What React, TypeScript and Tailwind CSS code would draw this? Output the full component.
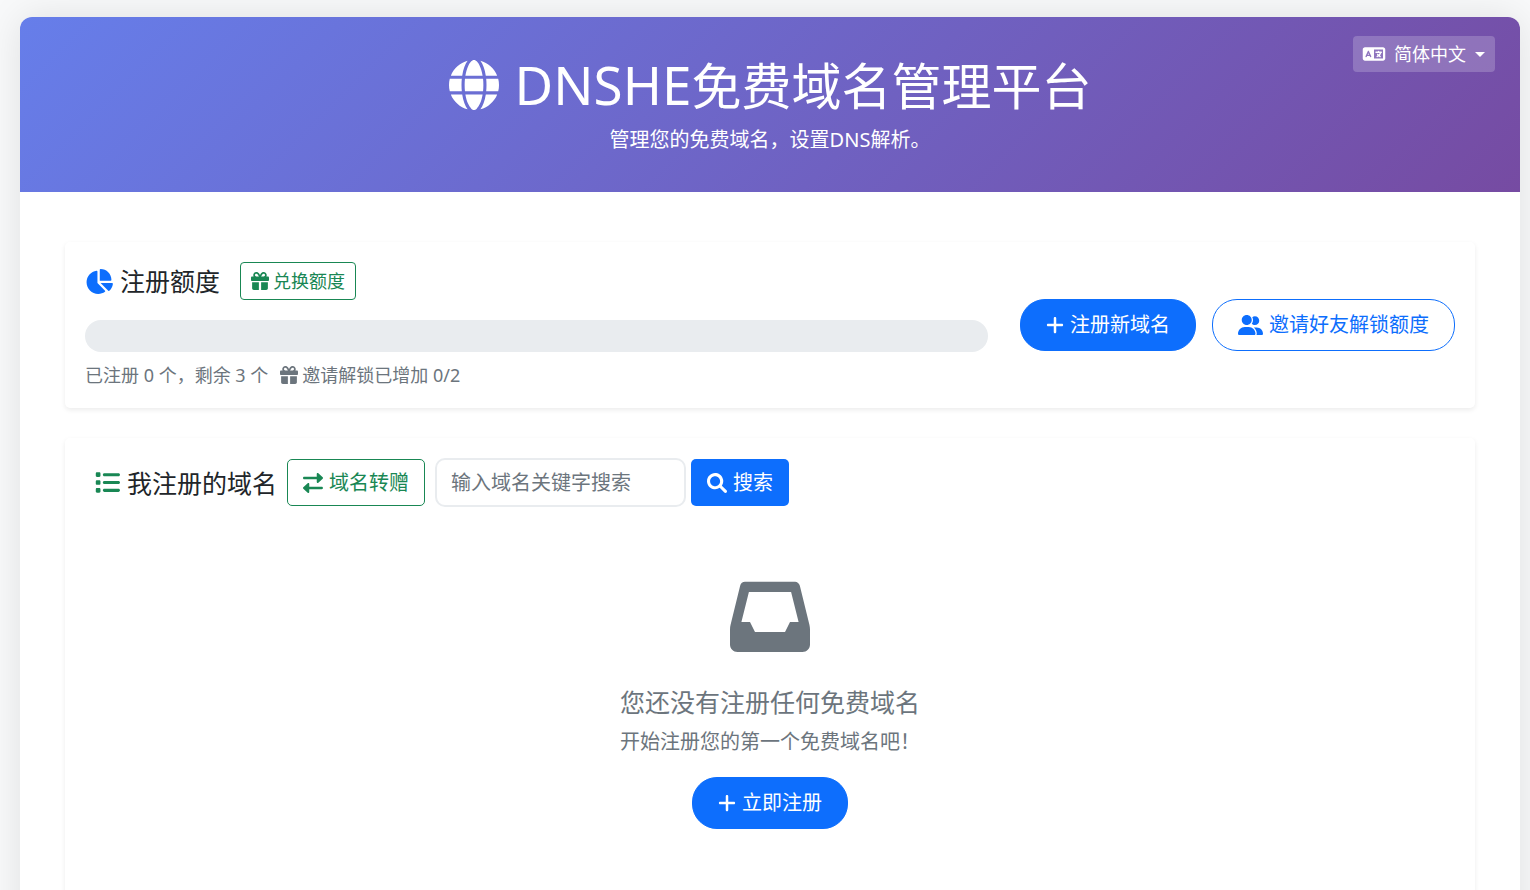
import { useState } from 'react'
import type { ReactNode } from 'react'
import { FaChartPie, FaGift, FaGlobe, FaLanguage, FaList } from 'react-icons/fa6'

interface Quota {
  used: number
  total: number
  inviteBonus: number
  inviteLimit: number
}

interface IconProps {
  className?: string
}

const quota: Quota = { used: 0, total: 3, inviteBonus: 0, inviteLimit: 2 }

function PlusIcon({ className }: IconProps) {
  return (
    <svg viewBox="0 0 448 512" fill="currentColor" className={className} aria-hidden>
      <path d="M432 256c0 17.69-14.33 32.01-32 32.01H256v144c0 17.69-14.33 31.99-32 31.99s-32-14.3-32-31.99v-144H48c-17.67 0-32-14.32-32-32.01s14.33-31.99 32-31.99H192v-144c0-17.69 14.33-32.01 32-32.01s32 14.32 32 32.01v144h144C417.7 224 432 238.3 432 256z" />
    </svg>
  )
}

function SearchIcon({ className }: IconProps) {
  return (
    <svg viewBox="0 0 512 512" fill="currentColor" className={className} aria-hidden>
      <path d="M500.3 443.7l-119.7-119.7c27.22-40.41 40.65-90.9 33.46-144.7C401.8 87.79 326.8 13.32 235.2 1.723C99.01-15.51-15.51 99.01 1.724 235.2c11.6 91.64 86.08 166.7 177.6 178.9c53.8 7.189 104.3-6.236 144.7-33.46l119.7 119.7c15.62 15.62 40.95 15.62 56.57 0C515.9 484.7 515.9 459.3 500.3 443.7zM79.1 208c0-70.58 57.42-128 128-128s128 57.42 128 128c0 70.58-57.42 128-128 128S79.1 278.6 79.1 208z" />
    </svg>
  )
}

function InboxIcon({ className }: IconProps) {
  return (
    <svg viewBox="0 0 512 512" fill="currentColor" className={className} aria-hidden>
      <path d="M447 56.25C443.5 42 430.7 31.1 416 31.1H96c-14.69 0-27.47 10-31.03 24.25L3.715 304.9C1.247 314.9 0 325.2 0 335.5v96.47c0 26.51 21.49 48 48 48h416c26.51 0 48-21.49 48-48v-96.47c0-10.32-1.247-20.6-3.715-30.61L447 56.25zM352 352H160L128 288H72.97L121 96h270l48.03 192H384L352 352z" />
    </svg>
  )
}

function TransferIcon({ className }: IconProps) {
  return (
    <svg viewBox="0 0 512 512" fill="currentColor" className={className} aria-hidden>
      <path d="M32 160h319.9l.0791 72c0 9.547 5.652 18.19 14.41 22c8.754 3.812 18.93 2.078 25.93-4.406l112-104c10.24-9.5 10.24-25.69 0-35.19l-112-104c-6.992-6.484-17.17-8.217-25.93-4.408c-8.758 3.816-14.41 12.46-14.41 22L351.9 96H32C14.31 96 0 110.3 0 127.1S14.31 160 32 160zM480 352H160.1L160 279.1c0-9.547-5.652-18.19-14.41-22C136.9 254.2 126.7 255.9 119.7 262.4l-112 104c-10.24 9.5-10.24 25.69 0 35.19l112 104c6.992 6.484 17.17 8.219 25.93 4.406C154.4 506.2 160 497.5 160 488L160.1 416H480c17.69 0 32-14.31 32-31.1S497.7 352 480 352z" />
    </svg>
  )
}

function FriendsIcon({ className }: IconProps) {
  return (
    <svg viewBox="0 0 640 512" fill="currentColor" className={className} aria-hidden>
      <path d="M224 256c70.7 0 128-57.31 128-128S294.7 0 224 0C153.3 0 96 57.31 96 128S153.3 256 224 256zM274.7 304H173.3C77.61 304 0 381.7 0 477.4C0 496.5 15.52 512 34.66 512h378.7C432.5 512 448 496.5 448 477.4C448 381.7 370.4 304 274.7 304zM479.1 320h-73.85C451.2 357.7 480 414.1 480 477.3C480 490.1 476.2 501.9 470 512h138C625.7 512 640 497.6 640 479.1C640 391.6 568.4 320 479.1 320zM432 256C493.9 256 544 205.9 544 144S493.9 32 432 32c-25.11 0-48.04 8.555-66.72 22.51C376.8 76.63 384 101.4 384 128c0 35.52-11.93 68.14-31.59 94.71C372.7 243.2 400.8 256 432 256z" />
    </svg>
  )
}

function LanguageMenu() {
  return (
    <div className="absolute right-[25px] top-[19px] flex h-9 items-center rounded bg-white/20 pl-[9px] text-lg text-white">
      <FaLanguage className="h-[18px] w-6" aria-hidden />
      <select
        aria-label="语言"
        className="h-9 cursor-pointer appearance-none bg-transparent pl-2 pr-[29px] outline-none"
        defaultValue="zh"
      >
        <option value="zh">简体中文</option>
        <option value="en">English</option>
      </select>
      <svg className="pointer-events-none absolute right-2.5 h-[5px] w-2.5" viewBox="0 0 10 5" fill="currentColor" aria-hidden>
        <path d="M0 0h10L5 5z" />
      </svg>
    </div>
  )
}

function PageHeader() {
  return (
    <header className="relative rounded-t-xl bg-[linear-gradient(135deg,#667eea_0%,#764ba2_100%)] pb-[37px] pt-[38px] text-center text-white">
      <h1 className="mb-2.5 flex h-[60px] items-center justify-center text-[50px] leading-[60px]">
        <FaGlobe className="mr-4 h-[50px] w-[50px]" aria-hidden />
        <span>
          <span className="text-[53px]">DNSHE</span>免费域名管理平台
        </span>
      </h1>
      <p className="text-xl leading-[30px]">管理您的免费域名，设置DNS解析。</p>
      <LanguageMenu />
    </header>
  )
}

function Card({ children }: { children: ReactNode }) {
  return <section className="rounded-[5px] bg-white p-5 shadow-[0_2px_5px_rgba(0,0,0,0.08)]">{children}</section>
}

function PillButton({ icon, children, outline = false }: { icon: ReactNode; children: ReactNode; outline?: boolean }) {
  const variantClasses = outline
    ? 'border-[#0d6efd] bg-white text-[#0d6efd] hover:bg-[#0d6efd] hover:text-white'
    : 'border-[#0d6efd] bg-[#0d6efd] text-white hover:bg-[#0b5ed7]'

  return (
    <button
      type="button"
      className={`inline-flex h-[52px] shrink-0 items-center gap-1.5 rounded-[25px] border px-[25px] text-xl ${variantClasses}`}
    >
      {icon}
      {children}
    </button>
  )
}

function QuotaCard() {
  const percent = (quota.used / quota.total) * 100

  return (
    <Card>
      <div className="flex flex-wrap items-center gap-8 lg:flex-nowrap">
        <div className="min-w-0 flex-1">
          <div className="mb-5 flex items-center gap-5">
            <h2 className="flex items-center gap-[7px] text-[25px] leading-[30px]">
              <FaChartPie className="h-[25px] w-7 text-[#0d6efd]" aria-hidden />
              注册额度
            </h2>
            <button
              type="button"
              className="flex h-[38px] items-center gap-1 rounded border border-[#198754] px-2.5 text-lg text-[#198754] hover:bg-[#198754] hover:text-white"
            >
              <FaGift className="h-[18px] w-[18px]" aria-hidden />
              兑换额度
            </button>
          </div>
          <div
            role="progressbar"
            aria-label="注册额度"
            aria-valuenow={quota.used}
            aria-valuemin={0}
            aria-valuemax={quota.total}
            className="mb-2.5 h-8 overflow-hidden rounded-2xl bg-[#e9ecef]"
          >
            <div className="h-full bg-[#0d6efd]" style={{ width: `${percent}%` }} />
          </div>
          <p className="flex items-center text-lg leading-[26px] text-[#6c757d]">
            <span>
              已注册 {quota.used} 个，剩余 {quota.total - quota.used} 个
            </span>
            <FaGift className="ml-3 mr-1 h-[18px] w-[18px]" aria-hidden />
            <span>
              邀请解锁已增加 {quota.inviteBonus}/{quota.inviteLimit}
            </span>
          </p>
        </div>
        <div className="flex flex-wrap gap-4">
          <PillButton icon={<PlusIcon className="h-5 w-[18px]" />}>注册新域名</PillButton>
          <PillButton outline icon={<FriendsIcon className="h-5 w-[25px]" />}>
            邀请好友解锁额度
          </PillButton>
        </div>
      </div>
    </Card>
  )
}

function DomainToolbar() {
  const [keyword, setKeyword] = useState('')

  return (
    <div className="flex flex-wrap items-center gap-2.5 pl-2.5">
      <h2 className="flex items-center gap-[7px] text-[25px] leading-[30px]">
        <FaList className="h-[25px] w-[25px] text-[#198754]" aria-hidden />
        我注册的域名
      </h2>
      <button
        type="button"
        className="flex h-[47px] items-center gap-1.5 rounded-[5px] border border-[#198754] px-[15px] text-xl text-[#198754] hover:bg-[#198754] hover:text-white"
      >
        <TransferIcon className="h-5 w-5" />
        域名转赠
      </button>
      <form className="flex items-center gap-[5px]" onSubmit={(event) => event.preventDefault()}>
        <input
          type="search"
          aria-label="输入域名关键字搜索"
          placeholder="输入域名关键字搜索"
          value={keyword}
          onChange={(event) => setKeyword(event.target.value)}
          className="h-[49px] w-[251px] rounded-[10px] border-2 border-[#e9ecef] px-3.5 text-xl outline-none placeholder:text-[#6c757d] focus:border-[#0d6efd]"
        />
        <button
          type="submit"
          className="flex h-[47px] items-center gap-1.5 rounded-[5px] bg-[#0d6efd] px-4 text-xl text-white hover:bg-[#0b5ed7]"
        >
          <SearchIcon className="h-5 w-5" />
          搜索
        </button>
      </form>
    </div>
  )
}

function EmptyState() {
  return (
    <div className="flex flex-col items-center py-[70px] text-[#6c757d]">
      <InboxIcon className="mb-[30px] h-20 w-20" />
      <div className="mb-5">
        <h3 className="mb-2.5 text-[25px] leading-[30px]">您还没有注册任何免费域名</h3>
        <p className="text-xl leading-[30px]">开始注册您的第一个免费域名吧！</p>
      </div>
      <PillButton icon={<PlusIcon className="h-5 w-[18px]" />}>立即注册</PillButton>
    </div>
  )
}

export default function App() {
  return (
    <div className="min-h-screen bg-[#f8f9fa] px-5 pt-[17px] font-['Noto_Sans','Noto_Sans_CJK_SC',sans-serif] text-[#212529] lg:pr-2.5">
      <div className="rounded-t-xl bg-white shadow-[0_0_38px_rgba(0,0,0,0.1)]">
        <PageHeader />
        <main className="flex flex-col gap-[30px] px-[45px] pb-[45px] pt-[50px]">
          <QuotaCard />
          <Card>
            <DomainToolbar />
            <EmptyState />
          </Card>
        </main>
      </div>
    </div>
  )
}
